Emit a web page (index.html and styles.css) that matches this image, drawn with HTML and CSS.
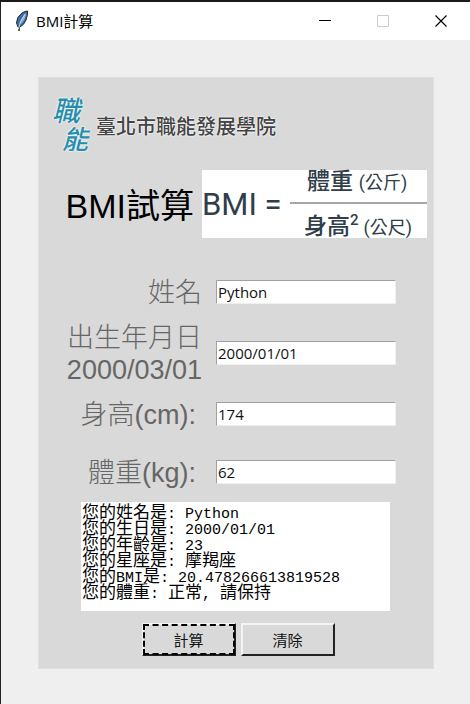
FILE: index.html
```html
<!DOCTYPE html>
<html lang="zh-Hant">
<head>
<meta charset="utf-8">
<title>BMI計算</title>
<link rel="stylesheet" href="styles.css">
</head>
<body>
<div class="window">
  <header class="titlebar">
    <svg class="feather" viewBox="0 0 16 22" aria-hidden="true">
      <path d="M4 21 L4.500 14" stroke="#333" stroke-width="1.500" fill="none"/>
      <path d="M3 17 L1.500 13 Q1.500 7 7 3 Q10 1 12.500 1 Q13 5 11 10 Q9 15 5 17Z" fill="#3f6c9e" stroke="#252b33" stroke-width="1"/>
      <path d="M5 13 Q7 7 11 3 Q11 9 6 14Z" fill="#80b4e8"/>
      <path d="M3.500 19 Q4 12 10 4" stroke="#c9dced" stroke-width="1" fill="none"/>
    </svg>
    <h1 class="title">BMI計算</h1>
    <div class="controls">
      <button class="control" type="button" aria-label="最小化"><svg viewBox="0 0 12 12"><path d="M0 5.500H12" stroke="#000"/></svg></button>
      <button class="control" type="button" aria-label="最大化" disabled><svg viewBox="0 0 12 12"><path d="M.5 .5H11.500V11.500H.5Z" stroke="#ccc"/></svg></button>
      <button class="control" type="button" aria-label="關閉"><svg viewBox="0 0 12 12"><path d="M.5 .5L11.500 11.500M11.500 .5L.5 11.500" stroke="#000" stroke-width="1.200"/></svg></button>
    </div>
  </header>
  <main class="panel">
    <div class="logo">
      <div class="mark"><span>職</span><span class="mark-low">能</span></div>
      <div class="school">臺北市職能發展學院</div>
    </div>
    <div class="heading">
      <h2 class="name">BMI試算</h2>
      <div class="formula">
        <span class="lhs">BMI =</span>
        <div class="fraction">
          <div class="term">體重 <small>(公斤)</small></div>
          <div class="term term-low">身高<sup>2</sup><small>(公尺)</small></div>
        </div>
      </div>
    </div>
    <form class="form">
      <div class="row"><label class="label" for="name">姓名</label><input class="field" id="name" value="Python"></div>
      <div class="row"><label class="label" for="birth">出生年月日<br>2000/03/01</label><input class="field" id="birth" value="2000/01/01"></div>
      <div class="row"><label class="label unit" for="height">身高(cm):</label><input class="field" id="height" value="174"></div>
      <div class="row row-last"><label class="label unit" for="weight">體重(kg):</label><input class="field" id="weight" value="62"></div>
      <output class="result">
        <span class="line">您的姓名是<i>: Python</i></span>
        <span class="line">您的生日是<i>: 2000/01/01</i></span>
        <span class="line">您的年齡是<i>: 23</i></span>
        <span class="line">您的星座是<i>: </i>摩羯座</span>
        <span class="line">您的<i>BMI</i>是<i>: 20.478266613819528</i></span>
        <span class="line">您的體重<i>: </i>正常<i>, </i>請保持</span>
      </output>
      <div class="actions">
        <button class="button active" type="button">計算</button>
        <button class="button" type="button">清除</button>
      </div>
    </form>
  </main>
</div>
</body>
</html>
```
FILE: styles.css
```css
* { box-sizing: border-box; }

body {
  margin: 0;
  background: #efefef;
  font-family: "Open Sans", "Noto Sans CJK TC", sans-serif;
}

.window {
  min-height: 100vh;
  border-top: 2px solid #1c1a1b;
  border-left: 1px solid #242224;
}

.titlebar {
  display: flex;
  align-items: center;
  height: 38px;
  padding-left: 14px;
  background: #fff;
}

.feather { width: 16px; height: 22px; }

.title {
  margin: 0 0 0 5px;
  font-size: 15px;
  font-weight: 400;
  line-height: 20px;
}

.controls { display: flex; margin-left: auto; }

.control {
  display: flex;
  align-items: center;
  justify-content: center;
  width: 58px;
  height: 38px;
  padding: 0;
  border: 0;
  background: none;
}

.control svg { width: 12px; height: 12px; fill: none; }

.panel {
  margin: 37px 36px 36px 37px;
  padding-bottom: 12px;
  border: 1px solid #dfdfdf;
  background: #d9d9d9;
}

.logo {
  display: flex;
  align-items: center;
  padding: 17px 0 0 13px;
  text-shadow: 0 0 2px #fff, 0 0 2px #fff;
}

.mark {
  display: flex;
  flex-direction: column;
  width: 44px;
  color: #258eac;
  font-size: 28px;
  font-style: italic;
  font-weight: 500;
  line-height: 30px;
}

.mark-low { padding-left: 10px; font-size: 26px; line-height: 28px; }

.school {
  padding-top: 6px;
  color: #444;
  font-size: 20px;
  font-weight: 500;
  line-height: 24px;
  white-space: nowrap;
}

.heading {
  display: flex;
  align-items: center;
  justify-content: flex-end;
  gap: 8px;
  margin-top: 17px;
  padding-right: 6px;
}

.name {
  margin: 0;
  padding-top: 4px;
  font: 400 34px/40px "Liberation Sans", "Noto Sans CJK TC", sans-serif;
  white-space: nowrap;
}

.formula {
  display: flex;
  align-items: center;
  justify-content: space-between;
  width: 225px;
  height: 68px;
  background: #fff;
  color: #2f3e49;
  font-family: Roboto, "Noto Sans CJK TC", sans-serif;
  font-weight: 500;
}

.lhs { font-size: 31px; font-weight: 400; white-space: nowrap; }

.fraction { width: 137px; }

.term {
  height: 34px;
  padding-left: 17px;
  border-bottom: 2px solid #a5a8ab;
  font-size: 23px;
  line-height: 24px;
  white-space: nowrap;
}

.term-low {
  padding: 11px 0 0 14px;
  border: 0;
}

.term small { font-size: 18px; font-weight: 400; }

.term sup { margin-right: 5px; font-size: 15px; line-height: 0; }

.form {
  display: flex;
  flex-direction: column;
  margin-top: 26px;
}

.row {
  display: grid;
  grid-template-columns: 163px 180px;
  align-items: center;
  column-gap: 14px;
  min-height: 56px;
}

.row-last { min-height: 60px; }

.label {
  padding-top: 2px;
  color: #666;
  font: 300 27px/32px "Liberation Sans", "Noto Sans CJK TC", sans-serif;
  text-align: right;
  white-space: nowrap;
}

.unit { padding-right: 6px; }

.field {
  width: 100%;
  height: 24px;
  padding: 0 1px;
  border: 1px solid;
  border-color: #a0a0a0 #f0f0f0 #f0f0f0 #a0a0a0;
  background: #fff;
  color: #111;
  font: 15px "Open Sans", "Noto Sans CJK TC", sans-serif;
}

.result {
  display: block;
  margin: 0 43px 0 42px;
  padding: 1px 1px 12px;
  background: #fff;
  color: #000;
  font: 17px/16px "Noto Sans CJK TC", sans-serif;
}

.line { display: block; height: 16px; white-space: pre; }

.line i {
  font-family: "Liberation Mono", monospace;
  font-size: 15px;
  font-style: normal;
}

.actions {
  display: flex;
  justify-content: center;
  gap: 5px;
  margin-top: 12px;
  padding-left: 4px;
}

.button {
  width: 94px;
  height: 33px;
  padding: 0;
  border: 2px solid;
  border-color: #f4f4f4 #222 #222 #f4f4f4;
  background: #d9d9d9;
  color: #111;
  font: 15px "Open Sans", "Noto Sans CJK TC", sans-serif;
}

.active { outline: 2px dashed #000; outline-offset: -3px; }
```
